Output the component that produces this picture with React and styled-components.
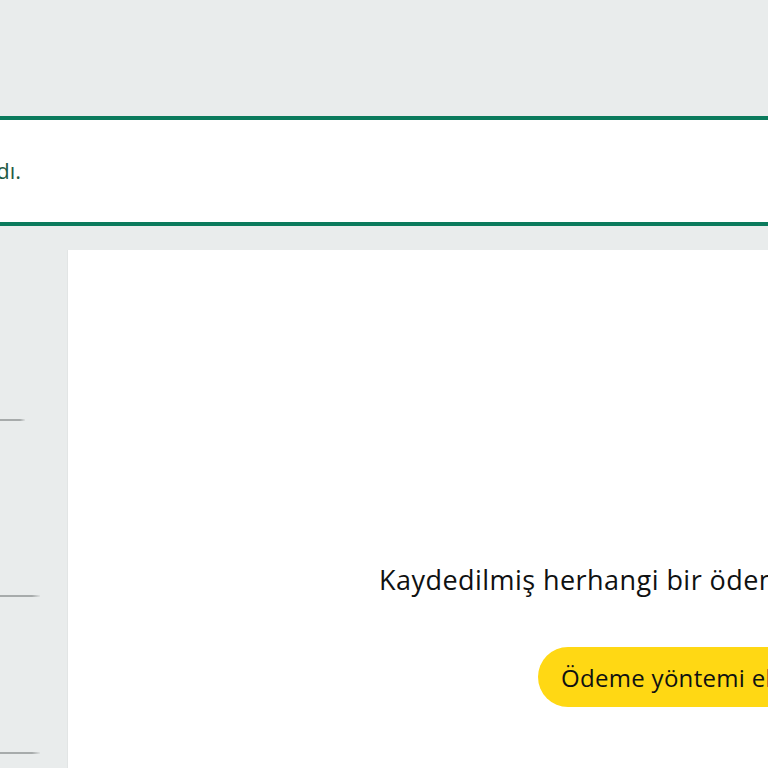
import React from "react";
import styled, { createGlobalStyle } from "styled-components";

const GlobalStyle = createGlobalStyle`
  html, body { margin: 0; padding: 0; }
  body {
    background: #e9ecec;
    overflow: hidden;
    font-family: "Open Sans", "Noto Sans", Arial, sans-serif;
    color: #0f1111;
  }
`;

const Page = styled.div`
  width: 768px;
  height: 768px;
  overflow: hidden;
  display: flex;
  flex-direction: column;
`;

const TopArea = styled.div`
  height: 116px;
  flex-shrink: 0;
  background: #e9ecec;
`;

const Alert = styled.div`
  flex-shrink: 0;
  height: 102px;
  background: #ffffff;
  border-top: 4px solid #0b7a5c;
  border-bottom: 4px solid #0b7a5c;
  display: flex;
  align-items: center;
`;

const AlertText = styled.div`
  width: 21px;
  display: flex;
  justify-content: flex-end;
  overflow: hidden;
  white-space: nowrap;
  font-size: 22px;
  color: #1e5a44;
  margin-top: -3px;
`;

const Main = styled.div`
  flex: 1;
  display: grid;
  grid-template-columns: 68px 1fr;
  padding-top: 24px;
`;

const Sidebar = styled.div`
  display: flex;
  flex-direction: column;
  border-right: 1px solid #e2e5e5;
`;

const SideItem = styled.div`
  height: ${(p) => p.$h}px;
  display: flex;
  align-items: flex-end;
  flex-shrink: 0;
`;

const Divider = styled.div`
  width: ${(p) => p.$w}px;
  height: 2px;
  background: linear-gradient(to right, #a7abab 80%, #dfe2e2);
`;

const Card = styled.div`
  background: #ffffff;
  padding: 312px 0 0 311px;
  overflow: hidden;
  white-space: nowrap;
`;

const EmptyText = styled.p`
  margin: 0;
  font-size: 27px;
  line-height: 36px;
  letter-spacing: 0.45px;
  color: #0f1111;
`;

const PrimaryButton = styled.button`
  margin: 49px 0 0 159px;
  height: 60px;
  padding: 0 23px;
  border: none;
  border-radius: 30px;
  background: #ffd814;
  color: #0f1111;
  font-family: inherit;
  font-size: 24px;
  letter-spacing: 0.3px;
  white-space: nowrap;
  cursor: pointer;
`;

export default function App() {
  return (
    <>
      <GlobalStyle />
      <Page>
        <TopArea />
        <Alert>
          <AlertText>Ödeme yöntemi kaldırıldı.</AlertText>
        </Alert>
        <Main>
          <Sidebar>
            <SideItem $h={171}>
              <Divider $w={25} />
            </SideItem>
            <SideItem $h={176}>
              <Divider $w={40} />
            </SideItem>
            <SideItem $h={157}>
              <Divider $w={40} />
            </SideItem>
          </Sidebar>
          <Card>
            <EmptyText>Kaydedilmiş herhangi bir ödeme yönteminiz yok.</EmptyText>
            <PrimaryButton>Ödeme yöntemi ekle</PrimaryButton>
          </Card>
        </Main>
      </Page>
    </>
  );
}
